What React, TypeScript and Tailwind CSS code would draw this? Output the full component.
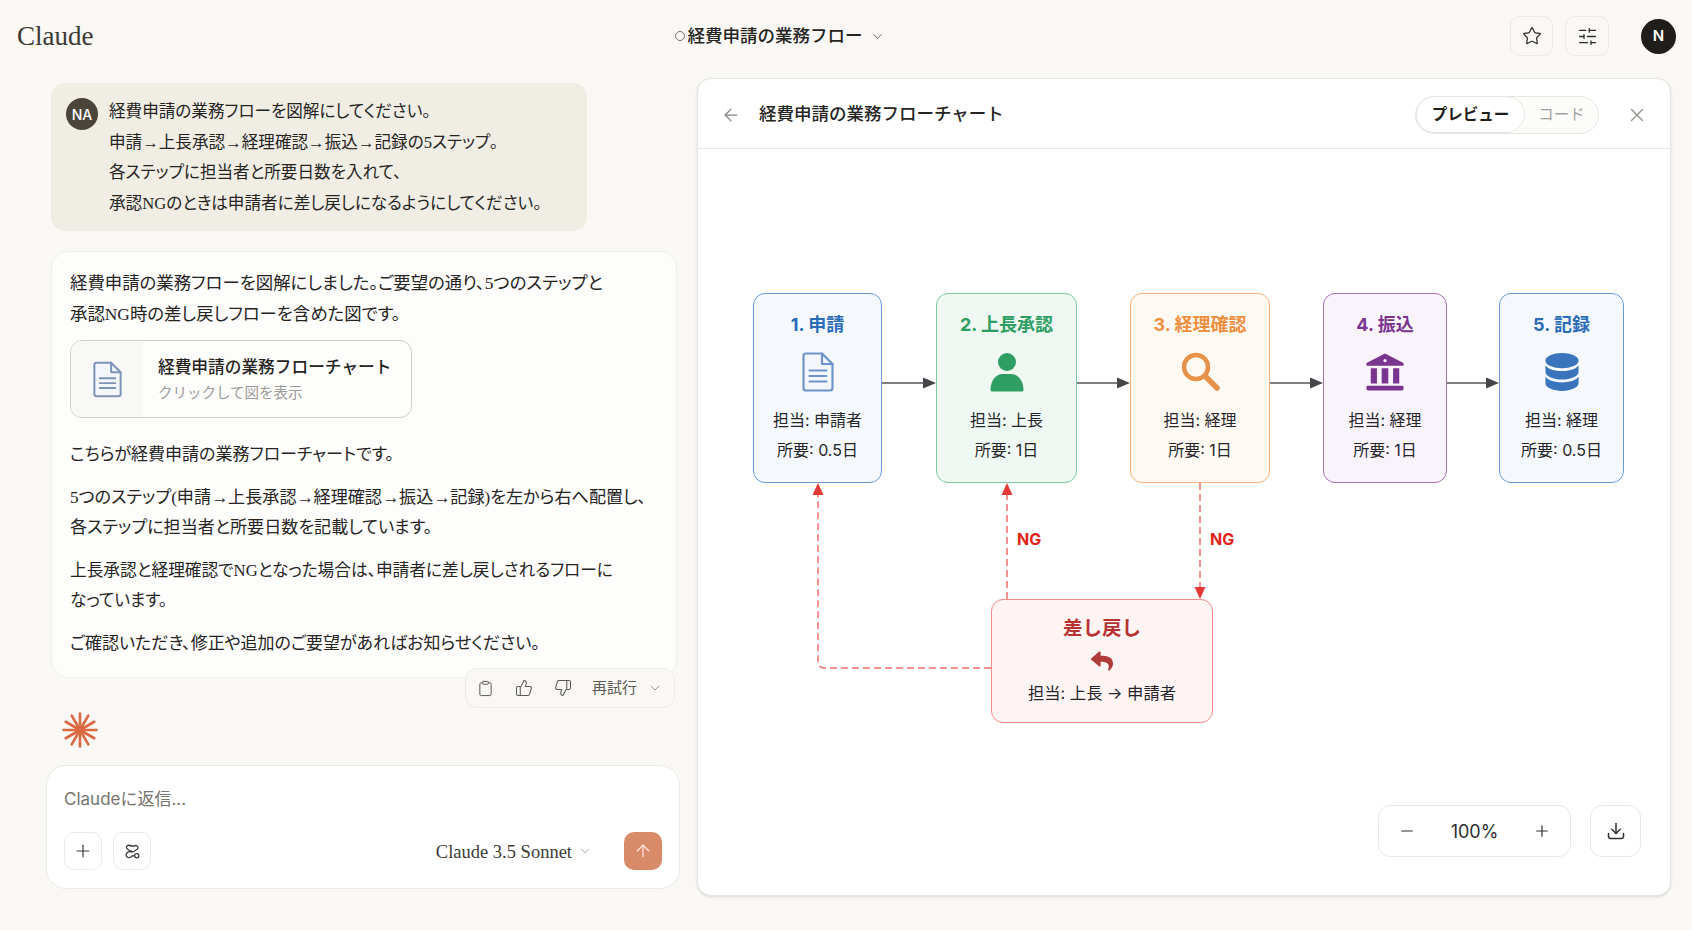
import { ArrowLeft, ArrowUp, ChevronDown, Clipboard, Download, Minus, Plus, SlidersHorizontal, Star, ThumbsDown, ThumbsUp, X } from 'lucide-react';
import { FaReply } from 'react-icons/fa';

const serif = "[font-family:'Liberation_Serif','Noto_Sans_CJK_JP',serif] [font-feature-settings:'palt']";
const sans = "[font-family:'Inter','Noto_Sans_CJK_JP',sans-serif]";

function DocIcon({ className }: { className?: string }) {
  return (
    <svg viewBox="0 0 32 40" className={className} fill="none" stroke="currentColor" strokeWidth="2.2" strokeLinejoin="round" strokeLinecap="round">
      <path d="M3.5 1.5H20L30.5 12V36a2.5 2.5 0 0 1-2.5 2.5H3.5A2.5 2.5 0 0 1 1.5 36V3.5a2 2 0 0 1 2-2Z" fill="#f3f6fb" />
      <path d="M20 1.5V12h10.5" />
      <path d="M7.5 18.5h17M7.5 24h17M7.5 29.5h17" />
    </svg>
  );
}

function PersonIcon() {
  return (
    <svg viewBox="0 0 34 40" className="w-[34px] h-[40px] text-[#2f9e63]" fill="currentColor">
      <circle cx="17" cy="10" r="9" />
      <path d="M0.5 38c0-10 6-16 12-16h9c6 0 12 6 12 16 0 1-1 1.500-2 1.500H2.500C1.500 39.500 0.500 39 0.500 38Z" />
    </svg>
  );
}

function SearchIcon() {
  return (
    <svg viewBox="0 0 40 40" className="w-[40px] h-[40px] text-[#e8914a]" fill="none" stroke="currentColor" strokeLinecap="round">
      <circle cx="16" cy="15" r="12" strokeWidth="4.5" />
      <path d="M26 25l11 11" strokeWidth="5.500" />
    </svg>
  );
}

function BankIcon() {
  return (
    <svg viewBox="0 0 40 40" className="w-[38px] h-[40px] text-[#7a3590]" fill="currentColor">
      <path d="M20 0.500 39.500 10.500V13.500H0.500V10.500Z" />
      <circle cx="20" cy="8" r="1.700" fill="#f8f3fa" />
      <path d="M5 16h6.500v16H5ZM16.500 16h7v16h-7ZM28.500 16H35v16h-6.500Z" />
      <rect x="0.500" y="34.500" width="39" height="5" rx="1.500" />
    </svg>
  );
}

function DatabaseIcon() {
  return (
    <svg viewBox="0 0 36 40" className="w-[34px] h-[40px] text-[#3a74bd]" fill="currentColor">
      <ellipse cx="18" cy="8" rx="17.500" ry="8" />
      <path d="M0.500 13c3 4 10 6 17.500 6s14.500-2 17.500-6v7c0 4.500-8 8-17.500 8s-17.500-3.500-17.500-8Z" />
      <path d="M0.500 25c3 4 10 6 17.500 6s14.500-2 17.500-6v7c0 4.500-8 8-17.500 8s-17.500-3.500-17.500-8Z" />
    </svg>
  );
}

function ClaudeMark() {
  const rays = [0, 30, 60, 90, 120, 150, 180, 210, 240, 270, 300, 330];
  return (
    <svg viewBox="0 0 36 36" className="w-[36px] h-[36px] ml-[16px] mt-[4px]" stroke="#dc6843" strokeWidth="2.600" strokeLinecap="round">
      {rays.map((r) => (
        <line key={r} x1="18" y1="18" x2="18" y2="1.500" transform={`rotate(${r} 18 18)`} />
      ))}
    </svg>
  );
}

function LinkKnot() {
  return (
    <svg viewBox="0 0 20 20" className="w-[17px] h-[17px] text-[#3a3835]" fill="none" stroke="currentColor" strokeWidth="1.500" strokeLinecap="round">
      <path d="M7.500 3.500C5 1.500 2 3.500 3 6c.6 1.500 2.500 2 4 3s3 2 5 1" />
      <path d="M12 3.500c2.500-1.500 5 .5 4.500 2.500-.4 1.600-2 2-3.500 3" />
      <path d="M8 2.800c1.300 1 2.500 1.200 4 .7" />
      <path d="M8.500 10.500C6 9.500 2.500 11 2.500 14c0 3 3.500 4 5.500 2.500 1-.8 1.500-1.500 3-1.500" />
      <circle cx="15" cy="15" r="2.500" />
    </svg>
  );
}

const steps = [
  { title: '1. 申請', who: '担当: 申請者', days: '所要: 0.5日', pos: 'left-[55px] w-[129px]', box: 'border-[#6a9bd8] bg-[#f5f9fe]', color: 'text-[#2b6cb8]', icon: <DocIcon className="w-[32px] h-[40px] text-[#6f94cc]" /> },
  { title: '2. 上長承認', who: '担当: 上長', days: '所要: 1日', pos: 'left-[238px] w-[141px]', box: 'border-[#7cc8a0] bg-[#eff8f3]', color: 'text-[#2e9e63]', icon: <PersonIcon /> },
  { title: '3. 経理確認', who: '担当: 経理', days: '所要: 1日', pos: 'left-[432px] w-[140px]', box: 'border-[#f6b27a] bg-[#fff9f3]', color: 'text-[#ee8e3f]', icon: <SearchIcon /> },
  { title: '4. 振込', who: '担当: 経理', days: '所要: 1日', pos: 'left-[625px] w-[124px]', box: 'border-[#a971b5] bg-[#f9f4fb]', color: 'text-[#7a3590]', icon: <BankIcon /> },
  { title: '5. 記録', who: '担当: 経理', days: '所要: 0.5日', pos: 'left-[801px] w-[125px]', box: 'border-[#6a9bd8] bg-[#f5f9fe]', color: 'text-[#2b6cb8]', icon: <DatabaseIcon /> },
];

function Connectors() {
  const gaps = [
    [184, 238],
    [379, 432],
    [572, 625],
    [749, 801],
  ];
  return (
    <svg className="absolute left-0 top-0 w-[972px] h-[745px]" viewBox="0 0 972 745" fill="none">
      {gaps.map(([a, b]) => (
        <g key={a}>
          <line x1={a} y1="234" x2={b - 12} y2="234" stroke="#55555a" strokeWidth="1.500" />
          <path d={`M${b} 234l-13-5.500v11Z`} fill="#45454a" />
        </g>
      ))}
      <g stroke="#f26d6d" strokeWidth="1.500" strokeDasharray="7 4">
        <path d="M293 519H126a6 6 0 0 1-6-6V345" />
        <path d="M309 450V346" />
        <path d="M502 334V439" />
      </g>
      <path d="M120 334l-5.500 12h11Z" fill="#e53935" />
      <path d="M309 334l-5.500 12h11Z" fill="#e53935" />
      <path d="M502 450l-5.500-12h11Z" fill="#e53935" />
    </svg>
  );
}

function Diagram() {
  return (
    <div className={`relative flex-1 ${sans}`}>
      <Connectors />
      {steps.map((s) => (
        <div key={s.title} className={`absolute top-[144px] h-[190px] ${s.pos} ${s.box} border-[1.5px] rounded-[12px] flex flex-col items-center pt-[19px] text-[#26262a]`}>
          <div className={`${s.color} text-[18px] leading-[24px] font-bold`}>{s.title}</div>
          <div className="mt-[15px] h-[40px] flex items-center justify-center">{s.icon}</div>
          <div className="mt-[13px] text-[16px] leading-[30px]">{s.who}</div>
          <div className="text-[16px] leading-[30px]">{s.days}</div>
        </div>
      ))}
      <div className="absolute left-[319px] top-[379px] text-[16px] leading-[22px] font-bold text-[#e2231a]">NG</div>
      <div className="absolute left-[512px] top-[379px] text-[16px] leading-[22px] font-bold text-[#e2231a]">NG</div>
      <div className="absolute left-[293px] top-[450px] w-[222px] h-[124px] border-[1.5px] border-[#f58a8a] bg-[#fff4f4] rounded-[12px] flex flex-col items-center pt-[16px] text-[#26262a]">
        <div className="text-[19.500px] leading-[24px] font-bold text-[#b83232]">差し戻し</div>
        <FaReply className="mt-[10px] w-[24px] h-[22px] text-[#b03c3a]" />
        <div className="mt-[9px] text-[16.300px] leading-[24px]">担当: 上長 → 申請者</div>
      </div>
      <div className="absolute right-[29px] bottom-[38px] flex items-stretch gap-[19px] text-[#2f2f2f]">
        <div className="flex items-center justify-between w-[193px] h-[52px] px-[19px] bg-white border border-[#e8e7e3] rounded-[12px]">
          <Minus className="w-[18px] h-[18px]" strokeWidth={1.6} />
          <span className="text-[18px]">100%</span>
          <Plus className="w-[18px] h-[18px]" strokeWidth={1.6} />
        </div>
        <div className="flex items-center justify-center w-[51px] h-[52px] bg-white border border-[#e8e7e3] rounded-[12px]">
          <Download className="w-[20px] h-[20px]" strokeWidth={1.8} />
        </div>
      </div>
    </div>
  );
}

function PreviewPanel() {
  return (
    <section className="w-[974px] h-[818px] flex flex-col bg-white border border-[#e6e5e0] rounded-[14px] shadow-sm overflow-hidden">
      <header className={`h-[70px] shrink-0 flex items-center border-b border-[#e8e7e3] pl-[23px] pr-[22px] pt-[2px] ${sans}`}>
        <ArrowLeft className="w-[20px] h-[20px] text-[#85837e]" strokeWidth={1.5} />
        <h2 className="ml-[18px] text-[17.5px] font-medium text-[#26251f]">経費申請の業務フローチャート</h2>
        <div className="ml-auto flex items-center w-[184px] h-[38px] border border-[#e6e5e0] rounded-full bg-[#fcfcfb]">
          <div className="flex items-center justify-center w-[109px] h-[37px] bg-white border border-[#e6e5e0] rounded-full text-[15.5px] font-bold text-[#1f1e1b]">プレビュー</div>
          <div className="flex-1 text-center text-[15.5px] text-[#a3a29d]">コード</div>
        </div>
        <X className="ml-[27px] w-[22px] h-[22px] text-[#8f8e89]" strokeWidth={1.3} />
      </header>
      <Diagram />
    </section>
  );
}

function ChatColumn() {
  return (
    <div className="w-[697px] shrink-0 pl-[46px] pr-[17px] flex flex-col">
      <div className="ml-[5px] mt-[5px] w-[536px] h-[148px] pt-[15px] pl-[15px] flex gap-[11px] bg-[#efede4] rounded-[14px]">
        <div className={`w-[32px] h-[32px] shrink-0 rounded-full bg-[#4a443b] text-white text-[14px] font-medium flex items-center justify-center ${sans}`}>NA</div>
        <p className={`${serif} -mt-[1px] text-[16.600px] leading-[30.500px] text-[#26241f] whitespace-nowrap`}>
          経費申請の業務フローを図解にしてください。<br />
          申請→上長承認→経理確認→振込→記録の5ステップ。<br />
          各ステップに担当者と所要日数を入れて、<br />
          承認NGのときは申請者に差し戻しになるようにしてください。
        </p>
      </div>

      <div className="ml-[5px] mr-[3px] mt-[20px] h-[427px] pt-[16px] pl-[18px] pr-[10px] bg-[#fdfdfc] border border-[#efeeea] rounded-[18px]">
        <p className={`${serif} text-[17.400px] leading-[31px] text-[#26241f] whitespace-nowrap`}>
          経費申請の業務フローを図解にしました。ご要望の通り、5つのステップと<br />
          承認NG時の差し戻しフローを含めた図です。
        </p>
        <div className={`mt-[10px] w-[342px] h-[78px] flex border border-[#cfcfca] rounded-[12px] overflow-hidden ${sans}`}>
          <div className="w-[72px] shrink-0 bg-[#f8f8f6] flex items-center justify-center">
            <DocIcon className="w-[29px] h-[37px] text-[#7d93b8]" />
          </div>
          <div className="pl-[15px] pt-[14px]">
            <div className="text-[16.700px] leading-[24px] font-medium text-[#26241f] whitespace-nowrap">経費申請の業務フローチャート</div>
            <div className="mt-[3px] text-[14.500px] leading-[22px] text-[#9a9a96] whitespace-nowrap">クリックして図を表示</div>
          </div>
        </div>
        <div className={`${serif} mt-[22px] flex flex-col gap-[12px] text-[17px] leading-[30.500px] text-[#26241f] whitespace-nowrap`}>
          <p>こちらが経費申請の業務フローチャートです。</p>
          <p className="text-[17.100px]">
            5つのステップ(申請→上長承認→経理確認→振込→記録)を左から右へ配置し、<br />
            各ステップに担当者と所要日数を記載しています。
          </p>
          <p className="text-[16.700px]">
            上長承認と経理確認でNGとなった場合は、申請者に差し戻しされるフローに<br />
            なっています。
          </p>
          <p>ご確認いただき、修正や追加のご要望があればお知らせください。</p>
        </div>
      </div>

      <div className="relative self-end -mt-[10px] mr-[5px] w-[210px] h-[40px] flex items-center pl-[11px] bg-[#f9f8f5] border border-[#ecebe6] rounded-[12px] text-[#5b5a55]">
        <Clipboard className="w-[17px] h-[17px]" strokeWidth={1.4} />
        <ThumbsUp className="ml-[21px] w-[18px] h-[18px]" strokeWidth={1.4} />
        <ThumbsDown className="ml-[21px] w-[18px] h-[18px]" strokeWidth={1.4} />
        <span className={`ml-[20px] text-[15px] ${sans}`}>再試行</span>
        <ChevronDown className="ml-[10px] w-[16px] h-[16px] text-[#8f8e89]" strokeWidth={1.4} />
      </div>

      <ClaudeMark />

      <div className="mt-[17px] h-[124px] bg-white border border-[#ebeae6] rounded-[20px] pl-[17px] pr-[17px] pt-[20px] flex flex-col">
        <div className={`text-[17px] leading-[26px] text-[#77756f] ${sans}`}>Claudeに返信...</div>
        <div className="mt-[20px] flex items-center">
          <button className="w-[38px] h-[38px] flex items-center justify-center border border-[#ebeae6] rounded-[10px] text-[#3a3835]">
            <Plus className="w-[20px] h-[20px]" strokeWidth={1.4} />
          </button>
          <button className="ml-[11px] w-[38px] h-[38px] flex items-center justify-center border border-[#ebeae6] rounded-[10px]">
            <LinkKnot />
          </button>
          <span className={`ml-auto mt-[3px] text-[18.500px] text-[#3d3b36] ${serif}`}>Claude 3.5 Sonnet</span>
          <ChevronDown className="ml-[6px] w-[14px] h-[14px] text-[#8f8e89]" strokeWidth={1.4} />
          <button className="ml-[32px] w-[38px] h-[38px] flex items-center justify-center rounded-[10px] bg-[#d98a68] text-[#fbeee8]">
            <ArrowUp className="w-[20px] h-[20px]" strokeWidth={1.4} />
          </button>
        </div>
      </div>
    </div>
  );
}

export default function App() {
  return (
    <div className="w-[1692px] h-[930px] overflow-hidden bg-[#f9f8f4] flex flex-col">
      <header className="relative h-[78px] shrink-0 flex items-center pl-[17px] pr-[16px] pb-[6px]">
        <span className="[font-family:'Liberation_Serif',serif] text-[27px] text-[#3d3a34]">Claude</span>
        <div className={`ml-[581px] flex items-center text-[17.500px] font-medium text-[#26241f] ${sans}`}>
          <svg viewBox="0 0 12 12" className="w-[12px] h-[12px] mr-[1px]" fill="none" stroke="#77756f" strokeWidth="1">
            <circle cx="6" cy="6" r="4.500" />
          </svg>
          経費申請の業務フロー
          <ChevronDown className="ml-[8px] w-[15px] h-[15px] text-[#55534e]" strokeWidth={1.4} />
        </div>
        <div className="ml-auto flex items-center">
          <button className="w-[43px] h-[40px] flex items-center justify-center border border-[#ebeae6] rounded-[10px] text-[#2f2e2a]">
            <Star className="w-[20px] h-[20px]" strokeWidth={1.5} />
          </button>
          <button className="ml-[12px] w-[44px] h-[40px] flex items-center justify-center border border-[#ebeae6] rounded-[10px] text-[#2f2e2a]">
            <SlidersHorizontal className="w-[21px] h-[21px]" strokeWidth={1.5} />
          </button>
          <div className={`ml-[32px] w-[35px] h-[35px] rounded-full bg-[#1f1e1b] text-white text-[15px] font-semibold flex items-center justify-center ${sans}`}>N</div>
        </div>
      </header>
      <main className="flex items-start">
        <ChatColumn />
        <PreviewPanel />
      </main>
    </div>
  );
}
